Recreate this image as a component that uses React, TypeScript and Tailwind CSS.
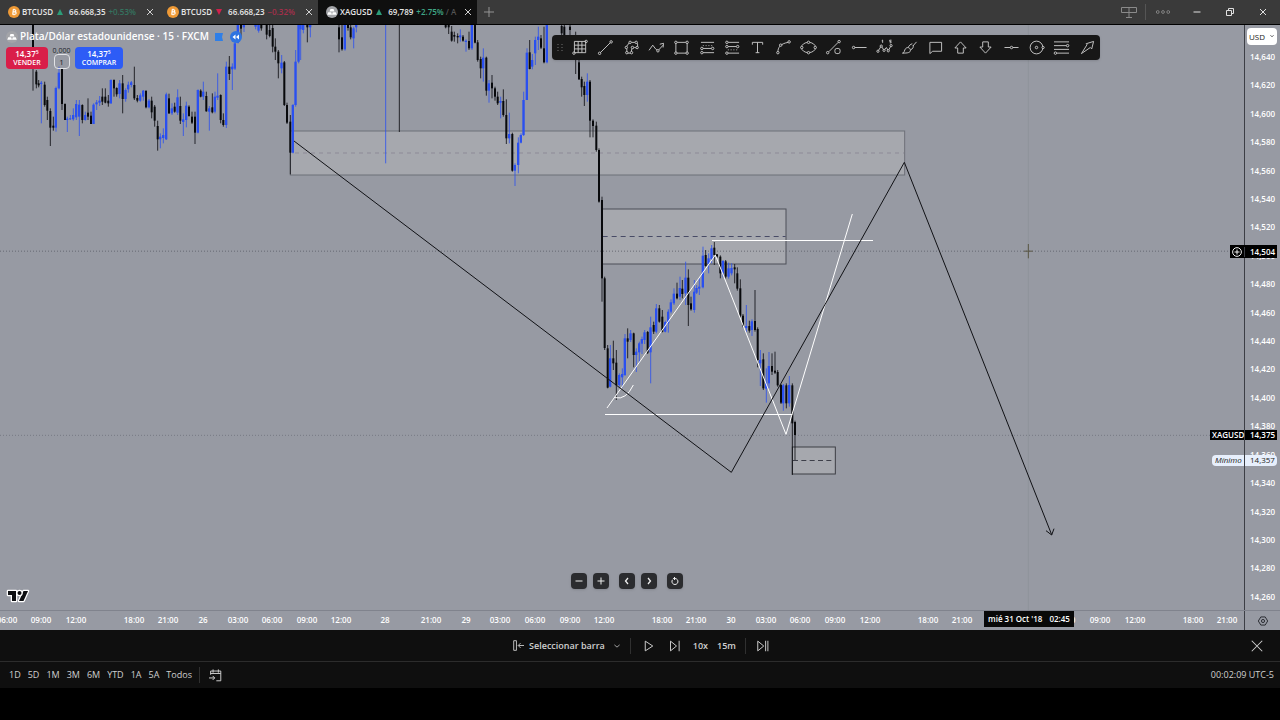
import React from 'react';

type Dir = 'u' | 'd';
// x, high, low, body top, body bottom, direction
type Candle = [number, number, number, number, number, Dir];

interface Segment {
  x: number;
  y: number;
  candles: Candle[];
}

// The chart is drawn on a 3732 x 1755 canvas that stretches with its panel.
const SEGMENTS: Segment[] = [
  {
    x: 0,
    y: 0,
    candles: [
      [99, 75, 272, 75, 200, 'd'], [109, 210, 265, 215, 253, 'd'], [116, 240, 262, 250, 256, 'd'],
      [124, 243, 370, 248, 252, 'u'], [134, 245, 320, 254, 315, 'd'], [142, 290, 360, 300, 332, 'd'],
      [151, 325, 438, 333, 383, 'd'], [160, 350, 392, 377, 383, 'd'], [168, 260, 395, 264, 383, 'u'],
      [177, 200, 268, 218, 265, 'u'], [186, 205, 330, 207, 312, 'd'], [195, 310, 360, 312, 360, 'd'],
      [202, 350, 396, 356, 360, 'u'], [211, 345, 360, 355, 358, 'u'], [220, 325, 362, 345, 358, 'u'],
      [229, 300, 360, 312, 352, 'u'], [238, 300, 408, 314, 350, 'u'], [247, 313, 370, 315, 360, 'd'],
      [256, 335, 362, 345, 360, 'u'], [264, 295, 360, 338, 350, 'd'], [273, 335, 372, 347, 372, 'd'],
      [281, 310, 372, 314, 372, 'u'], [290, 300, 330, 307, 313, 'u'], [299, 288, 318, 302, 308, 'u'],
      [307, 265, 315, 290, 305, 'd'], [316, 265, 310, 290, 308, 'd'], [325, 285, 320, 302, 310, 'd'],
      [333, 238, 312, 240, 310, 'u'], [342, 238, 290, 240, 265, 'd'], [350, 262, 290, 264, 283, 'd'],
      [359, 240, 295, 250, 282, 'u'], [368, 225, 340, 250, 297, 'd'], [377, 265, 305, 270, 297, 'u'],
      [385, 245, 278, 254, 268, 'u'], [394, 243, 262, 247, 255, 'u'], [403, 200, 300, 255, 295, 'd'],
      [412, 285, 307, 294, 302, 'd'], [421, 280, 305, 286, 302, 'u'], [430, 270, 302, 272, 290, 'u'],
      [438, 270, 325, 273, 322, 'd'], [447, 297, 325, 302, 322, 'u'], [455, 290, 355, 302, 337, 'd'],
      [464, 315, 380, 320, 362, 'd'], [473, 362, 452, 378, 418, 'd'], [481, 400, 445, 410, 418, 'u'],
      [490, 385, 430, 405, 414, 'u'], [499, 278, 420, 283, 418, 'u'], [507, 281, 342, 295, 340, 'd'],
      [516, 310, 345, 325, 340, 'u'], [524, 308, 338, 320, 335, 'd'], [533, 268, 345, 292, 338, 'u'],
      [541, 290, 372, 318, 362, 'd'], [550, 340, 408, 358, 366, 'u'], [559, 305, 382, 317, 360, 'u'],
      [567, 316, 350, 320, 348, 'd'], [576, 335, 372, 350, 368, 'd'], [585, 335, 432, 350, 398, 'd'],
      [594, 268, 400, 270, 398, 'u'], [602, 268, 292, 272, 290, 'd'], [610, 245, 300, 275, 290, 'u'],
      [619, 275, 335, 288, 334, 'd'], [628, 318, 392, 325, 335, 'u'], [637, 280, 340, 322, 337, 'd'],
      [645, 275, 340, 290, 335, 'u'], [653, 220, 300, 287, 293, 'u'], [662, 283, 370, 285, 360, 'd'],
      [670, 340, 380, 360, 375, 'd'], [679, 185, 384, 200, 375, 'u'], [688, 168, 240, 200, 222, 'd'],
      [697, 190, 270, 200, 208, 'u'], [705, 120, 210, 130, 206, 'u'], [714, 75, 130, 75, 128, 'u'],
      [723, 75, 110, 75, 86, 'd'], [732, 75, 96, 75, 82, 'u'], [767, 75, 88, 75, 80, 'u'],
      [776, 75, 98, 75, 92, 'u'], [784, 75, 92, 75, 85, 'd'], [800, 75, 118, 75, 104, 'd'],
      [809, 75, 112, 90, 108, 'd'], [818, 75, 157, 84, 140, 'd'], [826, 115, 180, 140, 155, 'd'],
      [835, 150, 235, 155, 190, 'd'], [845, 165, 220, 188, 205, 'u'], [853, 183, 318, 187, 315, 'd'],
      [861, 308, 372, 315, 368, 'd'], [871, 345, 523, 365, 458, 'd'], [879, 312, 460, 315, 458, 'u'],
      [887, 150, 320, 185, 315, 'u'], [896, 75, 190, 75, 185, 'u'],
    ],
  },
  {
    x: 900,
    y: 0,
    candles: [
      [2, 75, 180, 75, 88, 'u'], [10, 75, 100, 75, 90, 'u'], [22, 75, 127, 75, 82, 'd'],
      [31, 75, 112, 75, 82, 'u'], [117, 75, 157, 82, 118, 'd'], [126, 75, 152, 112, 148, 'd'],
      [135, 75, 152, 75, 148, 'u'], [144, 75, 92, 75, 84, 'd'], [152, 75, 118, 82, 112, 'd'],
      [161, 80, 145, 85, 115, 'u'], [169, 75, 97, 75, 82, 'u'], [257, 75, 490, 75, 76, 'u'],
      [298, 75, 396, 75, 76, 'd'], [437, 75, 85, 75, 82, 'd'], [446, 75, 102, 75, 82, 'd'],
      [455, 78, 125, 95, 122, 'd'], [463, 95, 125, 105, 110, 'd'], [473, 100, 130, 108, 112, 'd'],
      [481, 88, 125, 106, 112, 'u'], [489, 105, 125, 110, 122, 'd'], [498, 118, 155, 122, 126, 'u'],
      [507, 95, 150, 123, 145, 'd'], [516, 75, 150, 75, 145, 'u'], [525, 75, 130, 75, 128, 'd'],
      [533, 120, 185, 127, 180, 'd'], [542, 170, 235, 177, 205, 'd'], [550, 145, 245, 173, 205, 'u'],
      [559, 170, 287, 173, 272, 'd'], [567, 240, 308, 250, 272, 'u'], [576, 225, 295, 248, 265, 'd'],
      [585, 260, 302, 265, 290, 'd'], [593, 275, 315, 290, 310, 'd'], [602, 290, 355, 303, 308, 'u'],
      [610, 268, 350, 303, 345, 'd'], [619, 298, 432, 345, 415, 'd'], [628, 338, 430, 402, 415, 'u'],
      [637, 398, 515, 402, 512, 'd'], [645, 490, 558, 495, 512, 'u'], [655, 412, 520, 428, 495, 'u'],
      [663, 400, 430, 405, 428, 'u'], [671, 275, 408, 300, 405, 'u'], [681, 145, 300, 158, 300, 'u'],
      [689, 120, 208, 157, 207, 'd'], [697, 162, 208, 180, 200, 'u'], [706, 110, 195, 120, 160, 'u'],
      [715, 80, 150, 110, 120, 'u'], [723, 105, 147, 115, 143, 'd'], [732, 80, 190, 145, 187, 'd'],
      [741, 75, 190, 75, 187, 'u'], [785, 75, 110, 78, 100, 'd'], [793, 75, 120, 80, 110, 'd'],
      [810, 75, 120, 80, 90, 'd'], [827, 95, 222, 120, 180, 'd'], [837, 180, 240, 187, 238, 'd'],
      [845, 230, 290, 237, 262, 'd'], [853, 245, 318, 258, 285, 'd'], [862, 220, 305, 245, 285, 'u'],
      [870, 240, 412, 245, 362, 'd'], [879, 358, 412, 362, 378, 'd'], [889, 365, 455, 377, 450, 'd'],
      [897, 445, 608, 450, 605, 'd'],
    ],
  },
  {
    x: 1740,
    y: 390,
    candles: [
      [66, 200, 515, 210, 445, 'd'], [74, 440, 660, 445, 654, 'd'], [83, 645, 775, 655, 773, 'd'],
      [91, 645, 772, 685, 770, 'u'], [100, 632, 720, 685, 700, 'd'], [109, 660, 810, 698, 766, 'd'],
      [118, 730, 770, 735, 765, 'u'], [127, 715, 772, 732, 742, 'u'], [135, 612, 738, 625, 735, 'u'],
      [143, 595, 685, 625, 635, 'd'], [152, 600, 636, 610, 630, 'u'], [161, 608, 712, 610, 675, 'd'],
      [169, 655, 726, 665, 675, 'u'], [178, 635, 698, 640, 667, 'u'], [186, 620, 672, 627, 641, 'u'],
      [194, 600, 642, 607, 630, 'u'], [203, 603, 672, 606, 668, 'd'], [212, 560, 760, 592, 667, 'u'],
      [221, 575, 612, 585, 605, 'd'], [229, 522, 610, 535, 605, 'u'], [238, 525, 578, 535, 575, 'd'],
      [247, 540, 607, 560, 605, 'd'], [256, 572, 607, 576, 605, 'u'], [265, 538, 608, 545, 580, 'u'],
      [273, 508, 550, 517, 545, 'u'], [282, 475, 525, 491, 520, 'u'], [291, 458, 508, 491, 505, 'd'],
      [300, 440, 510, 474, 500, 'u'], [307, 450, 505, 476, 492, 'd'], [317, 395, 525, 443, 490, 'u'],
      [325, 418, 588, 443, 525, 'd'], [333, 500, 542, 520, 538, 'd'], [343, 450, 548, 485, 540, 'u'],
      [350, 465, 492, 474, 488, 'u'], [358, 445, 495, 470, 476, 'u'], [369, 350, 475, 377, 472, 'u'],
      [377, 360, 410, 375, 408, 'd'], [386, 370, 430, 385, 402, 'u'], [395, 345, 400, 355, 388, 'u'],
      [403, 336, 405, 353, 375, 'd'], [411, 372, 384, 373, 380, 'd'], [421, 376, 445, 380, 430, 'd'],
      [429, 390, 442, 393, 430, 'u'], [437, 390, 445, 394, 440, 'd'], [446, 398, 446, 415, 440, 'u'],
      [455, 400, 436, 414, 430, 'u'], [464, 402, 460, 412, 418, 'd'], [472, 412, 482, 430, 476, 'd'],
      [481, 448, 562, 475, 557, 'd'], [489, 552, 592, 557, 588, 'd'], [499, 525, 605, 588, 594, 'u'],
      [508, 572, 608, 588, 602, 'd'], [516, 568, 618, 574, 600, 'u'], [525, 480, 605, 573, 600, 'd'],
      [533, 592, 712, 597, 690, 'd'], [541, 660, 768, 690, 700, 'u'], [550, 670, 780, 688, 775, 'd'],
      [559, 715, 818, 760, 776, 'u'], [567, 666, 775, 708, 760, 'u'], [576, 670, 735, 708, 725, 'd'],
      [585, 665, 732, 722, 728, 'd'], [593, 720, 770, 726, 766, 'd'], [603, 762, 822, 765, 818, 'd'],
      [610, 762, 842, 766, 820, 'u'], [619, 760, 835, 766, 820, 'd'], [628, 738, 830, 765, 820, 'u'],
      [637, 760, 1035, 766, 880, 'd'], [645, 872, 990, 876, 915, 'd'],
    ],
  },
];

const PRICES = Array.from({ length: 20 }, (_, i) => `14,${640 - i * 20}`);

// label and the distance from the label before it
const TIMES: ReadonlyArray<[string, number]> = [
  ['06:00', 7], ['09:00', 34], ['12:00', 35], ['18:00', 58], ['21:00', 34], ['26', 35], ['03:00', 35],
  ['06:00', 34], ['09:00', 35], ['12:00', 34], ['28', 44], ['21:00', 46], ['29', 35], ['03:00', 34],
  ['06:00', 35], ['09:00', 35], ['12:00', 34], ['18:00', 58], ['21:00', 34], ['30', 35], ['03:00', 35],
  ['06:00', 34], ['09:00', 35], ['12:00', 35], ['18:00', 58], ['21:00', 34],
  ['06:00', 103], ['09:00', 35], ['12:00', 35], ['18:00', 58], ['21:00', 34], ['', 17],
];

const RANGES = ['1D', '5D', '1M', '3M', '6M', 'YTD', '1A', '5A', 'Todos'];

const TOOLS: ReadonlyArray<{ label: string; icon: React.ReactNode }> = [
  {
    label: 'Grid',
    icon: <><path d="M1.5 1.5h12v12h-12zM5.5 1.5v12M9.5 1.5v12M1.5 5.5h12M1.5 9.5h12" /><circle cx="14" cy="1.5" r="1.3" /><circle cx="1" cy="14" r="1.3" /></>,
  },
  { label: 'Trend line', icon: <><path d="M2.5 13.5 13 3" /><circle cx="1.7" cy="14.2" r="1.3" /><circle cx="14" cy="2" r="1.3" /></> },
  {
    label: 'Path',
    icon: <><path d="M3 14V9.5L1.8 8 6 2.5h7.5L14.5 4v4.5L11 8 8 10v4z" /><g className="fill-[#171717]"><circle cx="2.5" cy="8" r="1.3" /><circle cx="6.5" cy="2.5" r="1.3" /><circle cx="13" cy="2.5" r="1.3" /><circle cx="14" cy="8" r="1.3" /><circle cx="9" cy="8" r="1.3" /><circle cx="8" cy="13.5" r="1.3" /><circle cx="3" cy="13.5" r="1.3" /></g></>,
  },
  { label: 'Zigzag arrow', icon: <><path d="m0 11 4-5.5 3 4 2.5 2 5.5-6M11.5 4.5l4-1-.5 4.5" /><circle cx="9.5" cy="11.5" r="1.3" className="fill-[#171717]" /></> },
  {
    label: 'Rectangle',
    icon: <><path d="M2 2.5h12V14H2z" /><g className="fill-[#171717]"><circle cx="2" cy="2.5" r="1.3" /><circle cx="14" cy="2.5" r="1.3" /><circle cx="2" cy="14" r="1.3" /><circle cx="14" cy="14" r="1.3" /></g></>,
  },
  {
    label: 'Long position',
    icon: <><path d="M1 2.5h14M3 9h9M3 13.5h12" /><path d="M3 6h10" strokeDasharray="1 2" /><g className="fill-[#171717]"><circle cx="2" cy="9" r="1.3" /><circle cx="13.5" cy="9" r="1.3" /><circle cx="2" cy="13.5" r="1.3" /></g></>,
  },
  {
    label: 'Short position',
    icon: <><path d="M3 2.5h12M3 7h9M1 14h14" /><path d="M3 10.5h10" strokeDasharray="1 2" /><g className="fill-[#171717]"><circle cx="2" cy="2.5" r="1.3" /><circle cx="2" cy="7" r="1.3" /><circle cx="13.5" cy="7" r="1.3" /><circle cx="2" cy="14" r="1.3" /></g></>,
  },
  { label: 'Text', icon: <path d="M2.5 5V2.5h11V5M8 2.5v11M6 13.5h4" /> },
  { label: 'Curve', icon: <><path d="M2 13c0-5 2.5-9 11-10.5" /><g className="fill-[#171717]"><circle cx="2" cy="13.5" r="1.3" /><circle cx="5" cy="5.5" r="1.3" /><circle cx="14" cy="2" r="1.3" /></g></> },
  {
    label: 'Ellipse',
    icon: <><ellipse cx="8" cy="8" rx="7.5" ry="5.5" /><g className="fill-[#171717]"><circle cx="8" cy="2.5" r="1.3" /><circle cx="8" cy="13.5" r="1.3" /><circle cx=".8" cy="8" r="1.3" /><circle cx="15.2" cy="8" r="1.3" /></g></>,
  },
  { label: 'Measure', icon: <><path d="M3 12.5 13 2.5" /><circle cx="1.8" cy="13.5" r="1.3" /><circle cx="14" cy="1.7" r="1.3" /><rect x="9.5" y="9" width="5.5" height="5.5" rx="2" /></> },
  { label: 'Horizontal ray', icon: <><path d="M3 8h12.5" /><circle cx="1.7" cy="8" r="1.3" /></> },
  {
    label: 'Elliott wave',
    icon: <><path d="m1 12 3.5-5.5 3 4.5L10 8l2 3.5L15 6M6 0v3M5 .8l1-.8M15.5 .2h-2v1.3H15V3h-1.5" /><g className="fill-[#171717]"><circle cx="1" cy="12" r="1.2" /><circle cx="4.5" cy="6.5" r="1.2" /><circle cx="7.5" cy="11" r="1.2" /><circle cx="12" cy="11.5" r="1.2" /><circle cx="15" cy="6" r="1.2" /></g></>,
  },
  { label: 'Brush', icon: <path d="M.5 14C3 14 2 11 4 9s5-.5 5 2-3 3-8.500 3M6.500 8C7.500 6 9 4.500 11 4M9.200 10.500c2.300-1 3.300-3 2.800-5M11.500 6.500 15.500 2" /> },
  { label: 'Note', icon: <path d="M2 2.5h12.5V12H5l-3 2.5z" /> },
  { label: 'Arrow up', icon: <path d="M8 2 2 8.5h3V14h6V8.5h3z" /> },
  { label: 'Arrow down', icon: <path d="M8 14 2 7.5h3V2h6v5.5h3z" /> },
  { label: 'Horizontal line', icon: <><path d="M.5 8h6M9.5 8h6" /><circle cx="8" cy="8" r="1.3" /></> },
  { label: 'Circle', icon: <><circle cx="8" cy="8" r="6.8" /><circle cx="8" cy="8" r="1.3" /><circle cx="15" cy="8" r="1.2" className="fill-[#171717]" /></> },
  {
    label: 'Fibonacci retracement',
    icon: <><path d="M0 2h16M0 6h13M0 10h16M3 14h13" /><circle cx="14.5" cy="6" r="1.3" /><circle cx="1.5" cy="14" r="1.3" /></>,
  },
  { label: 'Arrow', icon: <path d="m1.500 14.500 6-9.500-1-1 8-2.500-2 8-1.500-1.500z" /> },
];

function Icon({ children, size = 16 }: { children: React.ReactNode; size?: number }) {
  return (
    <svg width={size} height={size} viewBox="0 0 16 16" fill="none" stroke="currentColor" overflow="visible" className="shrink-0" aria-hidden="true">
      {children}
    </svg>
  );
}

const CloseIcon = ({ size = 8 }: { size?: number }) => (
  <Icon size={size}>
    <path d="m2 2 12 12M14 2 2 14" strokeWidth={size > 10 ? 1.2 : 2} />
  </Icon>
);

function BitcoinLogo() {
  return (
    <svg width="12" height="12" viewBox="0 0 24 24" className="shrink-0" aria-hidden="true">
      <circle cx="12" cy="12" r="12" fill="#ef9a36" />
      <path
        d="M9.500 7.500h4a2 2 0 0 1 0 4.300h-3.500h4a2.300 2.300 0 0 1 0 4.700H8.500M10.500 7.500 9.500 16.500M12 5.500v2M12 16.500v2"
        fill="none"
        stroke="#fff"
        strokeWidth="2.2"
      />
    </svg>
  );
}

function SilverLogo() {
  return (
    <svg width="12" height="12" viewBox="0 0 24 24" className="shrink-0" aria-hidden="true">
      <circle cx="12" cy="12" r="12" fill="#a3a4a8" />
      <path d="M9 6h6l2 5H7zM4.500 12.500h6l1.500 5H2.500zM13.500 12.500h6l2 5H12z" fill="#fff" />
    </svg>
  );
}

interface TabProps {
  symbol: string;
  price: string;
  change: string;
  up: boolean;
  active?: boolean;
}

function Tab({ symbol, price, change, up, active }: TabProps) {
  return (
    <div className={`flex h-6 w-[159px] items-center pl-2 pr-px ${active ? 'bg-[#0f0f0f]' : ''}`}>
      <a href="#chart" className="flex flex-1 items-center whitespace-nowrap">
        {active ? <SilverLogo /> : <BitcoinLogo />}
        <span className="ml-[2px] font-semibold text-[#e6e6e6]">{symbol}</span>
        <svg width="6" height="6" viewBox="0 0 6 6" className="ml-1 mr-[6px] shrink-0" aria-hidden="true">
          <path d={up ? 'M3 0l3 6H0z' : 'M3 6L0 0h6z'} fill={up ? '#2d9c78' : '#d0214c'} />
        </svg>
        <span className="font-semibold text-[#e6e6e6]">{price}</span>
        <span className={`ml-[3px] font-semibold ${active ? 'text-[#3fa685]' : up ? 'text-[#35735f]' : 'text-[#a52f4b]'}`}>
          {change}
          {active && <span className="text-[#555]"> / A</span>}
        </span>
      </a>
      <button type="button" aria-label={`Close ${symbol}`} className="flex h-4 w-4 shrink-0 items-center justify-center text-[#d0d0d0]">
        <CloseIcon />
      </button>
    </div>
  );
}

function TopBar() {
  return (
    <header className="flex h-[25px] shrink-0 border-b border-black bg-[#3a3a3a] text-[8px] leading-3">
      <Tab symbol="BTCUSD" price="66.668,35" change="+0.53%" up />
      <Tab symbol="BTCUSD" price="66.668,23" change="−0.32%" up={false} />
      <Tab symbol="XAGUSD" price="69,789" change="+2.75%" up active />
      <button type="button" aria-label="New tab" className="flex w-6 items-center justify-center text-[#9a9a9a]">
        <Icon size={10}><path d="M8 0v16M0 8h16" strokeWidth="1.5" /></Icon>
      </button>
      <div className="flex-1" />
      <button type="button" aria-label="Layout" className="flex w-8 items-center justify-center text-[#8a8a8a]">
        <Icon><path d="M.5 3.5h15v5H.5zM8 3.5v10M5 13.5h6" /></Icon>
      </button>
      <div className="my-1 w-px bg-[#555]" />
      <button type="button" aria-label="More" className="flex w-[34px] items-center justify-center text-[#8a8a8a]">
        <Icon size={14}><circle cx="2" cy="8" r="1.6" /><circle cx="8" cy="8" r="1.6" /><circle cx="14" cy="8" r="1.6" /></Icon>
      </button>
      <button type="button" aria-label="Minimize" className="flex w-[33px] items-center justify-center text-[#e0e0e0]">
        <Icon size={8}><path d="M1 8h14" strokeWidth="2" /></Icon>
      </button>
      <button type="button" aria-label="Restore" className="flex w-[33px] items-center justify-center text-[#e0e0e0]">
        <Icon size={8}><path d="M1 5h10v10H1zM5 5V1h10v10h-4" strokeWidth="2" /></Icon>
      </button>
      <button type="button" aria-label="Close window" className="flex w-[34px] items-center justify-center text-[#e0e0e0]">
        <CloseIcon />
      </button>
    </header>
  );
}

function Candles() {
  return (
    <>
      {SEGMENTS.map((s) => (
        <g key={s.x} transform={`translate(${s.x} ${s.y})`}>
          {s.candles.map(([x, high, low, top, bottom, dir]) => (
            <g key={x} fill={dir === 'u' ? '#2a50f0' : '#08090c'}>
              <rect x={x - 1.5} y={high} width="3" height={low - high} opacity="0.8" />
              <rect
                x={dir === 'u' ? x - 4 : x - 3}
                y={top}
                width={bottom - top < 2 ? 0 : dir === 'u' ? 7 : 6}
                height={Math.max(bottom - top, 3)}
              />
            </g>
          ))}
        </g>
      ))}
    </>
  );
}

function Chart() {
  return (
    <svg className="block h-full w-full" viewBox="0 75 3732 1755" preserveAspectRatio="none" role="img" aria-label="XAGUSD">
      <g fill="#a6a8ae" stroke="#6d7078" strokeWidth="3">
        <rect x="871" y="393" width="1843" height="132" />
        <rect x="1805" y="627" width="553" height="165" stroke="#4c4f58" />
        <rect x="2377" y="1341" width="129" height="81" stroke="#3c3e45" />
      </g>
      <g fill="none" strokeWidth="3">
        <path d="M885 459H2712" stroke="#8d8a97" strokeDasharray="12 12" />
        <path d="M1808 709.5H2357" stroke="#484b66" strokeDasharray="15 12" />
        <path d="M2379 1381.5H2500" stroke="#3d3f49" strokeDasharray="15 10" />
        <path d="M0 753.5H3732" stroke="#666973" strokeDasharray="3 6" />
        <path d="M0 1306H3732" stroke="#777a84" strokeDasharray="3 6" />
        <path d="M3085 75V1833" stroke="#90939b" />
      </g>
      <Candles />
      <g fill="none" stroke="#fff" strokeWidth="3">
        <path d="M2136 721.5H2619M1815 1243.5H2377" />
        <path d="M1821 1224 2146 765 2358 1303 2557 642" />
        <path d="M1845 1193q33 8 55-38" />
      </g>
      <g fill="none" stroke="#101115" strokeWidth="3">
        <path d="M882 423 2194 1417 2713 487 3155 1604" />
        <path d="m3138 1592 17 13 7-19" />
      </g>
      <path d="M3085 732v43M3072 753.5h26" stroke="#5a5644" strokeWidth="3" />
    </svg>
  );
}

function SymbolLegend() {
  return (
    <div className="absolute left-1.5 top-1 text-white">
      <div className="flex h-[15px] items-center whitespace-nowrap">
        <SilverLogo />
        <h1 className="ml-[2px] text-[10px] font-semibold leading-[15px]">
          Plata/Dólar estadounidense · 15 · FXCM
        </h1>
        <svg width="8" height="8" viewBox="0 0 8 8" className="ml-[6px] shrink-0" aria-hidden="true">
          <path d="M0 0h8L7 4l1 4H0z" fill="#2f7fe8" />
        </svg>
        <svg width="12" height="12" viewBox="0 0 12 12" className="ml-[7px] shrink-0" aria-hidden="true">
          <circle cx="6" cy="6" r="6" fill="#2f73e0" />
          <path d="M5.500 3.500v5L2.500 6zM9 3.500v5L6 6z" fill="#fff" />
        </svg>
      </div>
      <div className="mt-[3px] flex items-start text-center text-[8px] font-semibold leading-[9px]">
        <button type="button" className="h-[22px] w-[42px] rounded bg-[#d91e49]">
          <span className="block">14,37⁵</span>
          <span className="block text-[7px]">VENDER</span>
        </button>
        <div className="flex w-[27px] flex-col items-center text-[7px] font-normal leading-[7px] text-[#22242a]">
          <span>0,000</span>
          <button type="button" aria-label="Cantidad" className="h-[15px] w-4 rounded border border-[#e2e3e6] text-[8px]">
            1
          </button>
        </div>
        <button type="button" className="h-[22px] w-12 rounded bg-[#2d5cf6]">
          <span className="block">14,37⁵</span>
          <span className="block text-[7px]">COMPRAR</span>
        </button>
      </div>
    </div>
  );
}

function DrawingToolbar() {
  return (
    <div role="toolbar" className="absolute left-[552px] top-[10px] flex h-[25px] w-[548px] rounded bg-[#171717] text-[#c9c9c9] shadow">
      <span className="flex w-4 items-center justify-center">
        <svg width="6" height="8" viewBox="0 0 6 8" fill="#444" aria-hidden="true">
          <path d="M0 0h2v1H0zM4 0h2v1H4zM0 3h2v1H0zM4 3h2v1H4zM0 6h2v1H0zM4 6h2v1H4z" />
        </svg>
      </span>
      {TOOLS.map((t) => (
        <button key={t.label} type="button" aria-label={t.label} className="flex flex-1 items-center justify-center">
          <Icon size={15}>{t.icon}</Icon>
        </button>
      ))}
    </div>
  );
}

const NAV_BUTTON = 'flex h-4 w-4 items-center justify-center rounded-sm bg-[#2b2c2f] text-[#f0f0f0] shadow';

function ChartNav() {
  return (
    <div className="absolute bottom-[21px] left-[571px] flex">
      <button type="button" aria-label="Zoom out" className={NAV_BUTTON}>
        <Icon size={8}><path d="M1 8h14" strokeWidth="2" /></Icon>
      </button>
      <button type="button" aria-label="Zoom in" className={`${NAV_BUTTON} ml-[6px]`}>
        <Icon size={8}><path d="M1 8h14M8 1v14" strokeWidth="2" /></Icon>
      </button>
      <button type="button" aria-label="Scroll left" className={`${NAV_BUTTON} ml-[10px]`}>
        <Icon size={8}><path d="M10 2 5 8l5 6" strokeWidth="2.5" /></Icon>
      </button>
      <button type="button" aria-label="Scroll right" className={`${NAV_BUTTON} ml-[6px]`}>
        <Icon size={8}><path d="m6 2 5 6-5 6" strokeWidth="2.5" /></Icon>
      </button>
      <button type="button" aria-label="Reset" className={`${NAV_BUTTON} ml-[10px]`}>
        <Icon size={8}><path d="M3 5.500a6 6 0 1 0 5-2.500H5M8 0 5 3l3 3" strokeWidth="2" /></Icon>
      </button>
    </div>
  );
}

function TradingViewLogo() {
  return (
    <svg width="24" height="14" viewBox="0 0 24 14" className="absolute bottom-[7px] left-1.5" aria-hidden="true">
      <g fill="#0d0e11" stroke="#fff" strokeWidth="2.5" paintOrder="stroke" strokeLinejoin="round">
        <path d="M2 2h8v10H6V6H2z" />
        <path d="M17.500 2H22l-4.500 10H13z" />
        <circle cx="13.5" cy="4" r="2" />
      </g>
    </svg>
  );
}

function PriceAxis() {
  return (
    <aside className="relative flex w-9 shrink-0 flex-col justify-between border-l border-[#3c3e45] pb-2 pt-[27px] text-[8px] font-semibold leading-[10px] text-white">
      {PRICES.map((p) => (
        <span key={p} className="pl-[5px]">{p}</span>
      ))}
      <select
        aria-label="Currency"
        className="absolute left-[2px] top-[3px] h-[17px] w-[30px] appearance-none rounded-sm bg-white pl-[2px] text-[8px] font-normal text-[#1b1c20]"
      >
        <option>USD</option>
      </select>
      <span className="pointer-events-none absolute left-[25px] top-[9px] text-[#1b1c20]">
        <Icon size={4}><path d="m2 5 6 6 6-6" strokeWidth="3" /></Icon>
      </span>
      <div className="absolute right-[3px] top-[220px] flex h-[13px] items-center bg-black leading-[13px]">
        <span className="flex w-[15px] justify-center border-r border-[#3c3e45]">
          <Icon size={10}><circle cx="8" cy="8" r="7" strokeWidth="1.5" /><path d="M8 4v8M4 8h8" strokeWidth="1.5" /></Icon>
        </span>
        <span className="w-8 pl-[5px]">14,504</span>
      </div>
      <div className="absolute right-[3px] top-[405px] flex h-[10px] bg-black">
        <span className="w-[35px] border-r border-[#3c3e45] pl-[2px]">XAGUSD</span>
        <span className="w-8 pl-[5px]">14,375</span>
      </div>
      <div className="absolute right-[3px] top-[430px] flex h-[11px] rounded-sm bg-[#e7effc] font-normal text-[#1b1c20]">
        <span className="w-[33px] border-r border-[#3c3e45] pl-[3px] italic">Mínimo</span>
        <span className="w-8 pl-[5px]">14,357</span>
      </div>
    </aside>
  );
}

function TimeAxis() {
  return (
    <div className="flex h-5 shrink-0 border-t border-[#80838d] text-[8px] font-semibold leading-3 text-white">
      <div className="relative flex flex-1 items-start overflow-hidden pt-[3px]">
        {TIMES.map(([label, gap], i) => (
          <span key={i} className="flex basis-0 justify-end" style={{ flexGrow: gap }}>
            <span className="flex w-0 justify-center whitespace-nowrap">{label}</span>
          </span>
        ))}
        <div className="absolute left-[984px] top-0 flex h-4 w-[90px] items-center justify-center gap-[7px] whitespace-nowrap bg-[#090909]">
          <span>mié 31 Oct '18</span>
          <span>02:45</span>
        </div>
      </div>
      <button type="button" aria-label="Axis settings" className="flex w-9 items-center justify-center border-l border-[#3c3e45] text-[#25272d]">
        <Icon size={10}><path d="M4.500 1.500h7l4 6.500-4 6.500h-7L.5 8z" strokeWidth="1.5" /><circle cx="8" cy="8" r="2.5" strokeWidth="1.5" /></Icon>
      </button>
    </div>
  );
}

function ReplayBar() {
  return (
    <div className="flex h-8 shrink-0 items-center border-b border-[#2c2c2c] bg-[#0f0f0f] text-[9px] font-semibold text-[#cfcfcf]">
      <div className="w-8" />
      <div className="flex flex-1 items-center justify-center">
        <button type="button" className="flex items-center">
          <Icon size={11}><path d="M1 1h4v14H1zM8 8h8M11 4.500 7.500 8l3.500 3.500" strokeWidth="1.3" /></Icon>
          <span className="ml-[5px]">Seleccionar barra</span>
          <span className="ml-[9px]"><Icon size={6}><path d="m1 5 7 6 7-6" strokeWidth="2" /></Icon></span>
        </button>
        <span className="mx-[10px] h-4 w-px bg-[#303030]" />
        <button type="button" aria-label="Play" className="ml-[2px]">
          <Icon size={12}><path d="M3 1.500 13 8 3 14.500z" strokeWidth="1.3" /></Icon>
        </button>
        <button type="button" aria-label="Forward" className="ml-[14px]">
          <Icon size={12}><path d="M2 1.500 10 8l-8 6.500zM13.500 1v14" strokeWidth="1.3" /></Icon>
        </button>
        <button type="button" className="ml-3">10x</button>
        <button type="button" className="ml-[9px]">15m</button>
        <span className="mx-[9px] h-4 w-px bg-[#303030]" />
        <button type="button" aria-label="Go to realtime" className="ml-[2px]">
          <Icon size={12}><path d="M1 1.500 9 8l-8 6.500zM11.500 1v14M14.500 1v14" strokeWidth="1.3" /></Icon>
        </button>
      </div>
      <button type="button" aria-label="Close replay" className="mr-[16px] flex w-[14px] justify-center">
        <CloseIcon size={14} />
      </button>
    </div>
  );
}

function RangeBar() {
  return (
    <footer className="flex h-[26px] shrink-0 items-center bg-[#0f0f0f] pl-[9px] pr-1.5 text-[9px] font-medium text-[#cfcfcf]">
      <nav className="flex gap-[7px]">
        {RANGES.map((r) => (
          <button key={r} type="button">{r}</button>
        ))}
      </nav>
      <span className="ml-[7px] mr-[9px] h-4 w-px bg-[#303030]" />
      <button type="button" aria-label="Go to date">
        <Icon size={13}><path d="M2 7V2.500h12.500v12H9M2 5.500h12.500M5 .5v4M11.500 .5v4M0 11h7M4.500 8.500 7 11l-2.500 2.500" strokeWidth="1.2" /></Icon>
      </button>
      <span className="ml-auto">00:02:09 UTC-5</span>
    </footer>
  );
}

export default function App() {
  return (
    <div className="flex h-screen flex-col bg-black pb-8 font-['Open_Sans',sans-serif]">
      <TopBar />
      <div className="flex min-h-0 flex-1 flex-col bg-[#979aa3]">
        <div className="flex min-h-0 flex-1">
          <main id="chart" className="relative min-w-0 flex-1 overflow-hidden">
            <Chart />
            <SymbolLegend />
            <DrawingToolbar />
            <ChartNav />
            <TradingViewLogo />
          </main>
          <PriceAxis />
        </div>
        <TimeAxis />
      </div>
      <ReplayBar />
      <RangeBar />
    </div>
  );
}
